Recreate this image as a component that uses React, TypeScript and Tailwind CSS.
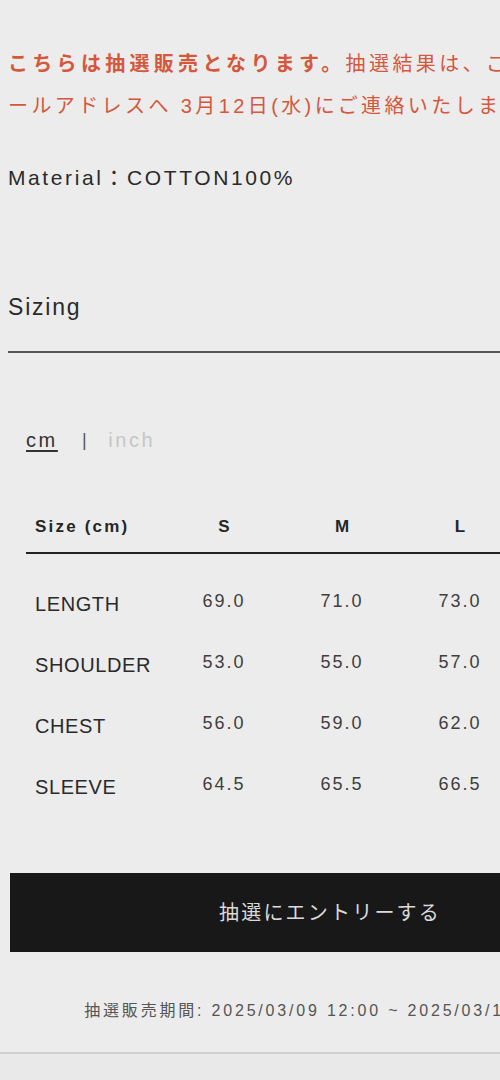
import React from "react";

const rows = [
  { label: "LENGTH", s: "69.0", m: "71.0", l: "73.0", xl: "75.0" },
  { label: "SHOULDER", s: "53.0", m: "55.0", l: "57.0", xl: "59.0" },
  { label: "CHEST", s: "56.0", m: "59.0", l: "62.0", xl: "65.0" },
  { label: "SLEEVE", s: "64.5", m: "65.5", l: "66.5", xl: "67.5" },
];

export default function App() {
  return (
    <div className="w-[500px] h-[1080px] overflow-hidden bg-[#ececec] font-[family-name:'Liberation_Sans','Noto_Sans_CJK_JP',sans-serif]">
      <div className="w-[660px] flex flex-col">
        {/* Notice */}
        <div className="pt-[43px] pl-[8px] text-[20px] leading-[42px] tracking-[3.4px] text-[#d4583c] whitespace-nowrap">
          <span className="font-bold tracking-[4.3px]">こちらは抽選販売となります。</span>
          <span>抽選結果は、ご登録のメ</span>
          <br />
          <span>ールアドレスへ 3月12日(水)にご連絡いたします。</span>
        </div>

        {/* Material */}
        <div className="mt-[36px] pl-[8px] text-[21px] leading-[30px] tracking-[2.6px] text-[#2a2a2a] whitespace-nowrap">
          Material：COTTON100%
        </div>

        {/* Sizing */}
        <div className="mt-[99px] pl-[8px] text-[23px] leading-[30px] tracking-[1.8px] text-[#2a2a2a]">
          Sizing
        </div>
        <div className="mt-[29px] ml-[8px] h-[2px] bg-[#555555]" />

        {/* Unit switch */}
        <div className="mt-[75px] pl-[26px] flex items-center text-[20px] leading-[24px] tracking-[2.6px]">
          <span className="text-[#333333] underline underline-offset-[3px] decoration-[1.5px]">cm</span>
          <span className="ml-[24px] text-[#555555] text-[18px]">|</span>
          <span className="ml-[19px] text-[#c6c6c6]">inch</span>
        </div>

        {/* Table */}
        <div className="mt-[50px] ml-[26px]">
          <div className="h-[52px] flex items-center border-b-2 border-[#222222]">
            <div className="w-[139px] pl-[9px] text-[17px] font-bold tracking-[2.2px] text-[#262626]">Size (cm)</div>
            <div className="w-[118px] text-center text-[17px] font-bold text-[#262626]">S</div>
            <div className="w-[118px] text-center text-[17px] font-bold text-[#262626]">M</div>
            <div className="w-[118px] text-center text-[17px] font-bold text-[#262626]">L</div>
            <div className="w-[118px] text-center text-[17px] font-bold text-[#262626]">XL</div>
          </div>
          <div className="pt-[19px]">
            {rows.map((r) => (
              <div key={r.label} className="h-[61px] flex items-center">
                <div className="w-[139px] pl-[9px] text-[20px] tracking-[0.6px] text-[#2a2a2a]">{r.label}</div>
                <div className="w-[118px] text-center text-[18px] tracking-[2px] text-[#3e3e3e] -mt-[4px]">{r.s}</div>
                <div className="w-[118px] text-center text-[18px] tracking-[2px] text-[#3e3e3e] -mt-[4px]">{r.m}</div>
                <div className="w-[118px] text-center text-[18px] tracking-[2px] text-[#3e3e3e] -mt-[4px]">{r.l}</div>
                <div className="w-[118px] text-center text-[18px] tracking-[2px] text-[#3e3e3e] -mt-[4px]">{r.xl}</div>
              </div>
            ))}
          </div>
        </div>

        {/* Button */}
        <div className="mt-[56px] ml-[10px] w-[640px] h-[79px] bg-[#181818] flex items-center justify-center">
          <span className="text-[20px] tracking-[2.2px] text-[#dadada]">抽選にエントリーする</span>
        </div>

        {/* Period */}
        <div className="mt-[47px] text-center text-[16px] leading-[24px] tracking-[2.8px] text-[#555555] whitespace-nowrap">
          抽選販売期間: 2025/03/09 12:00 ~ 2025/03/11 23:59
        </div>

        <div className="mt-[29px] h-[2px] bg-[#d0d0d0]" />
        <div className="h-[40px] bg-[#e9e9e9]" />
      </div>
    </div>
  );
}
